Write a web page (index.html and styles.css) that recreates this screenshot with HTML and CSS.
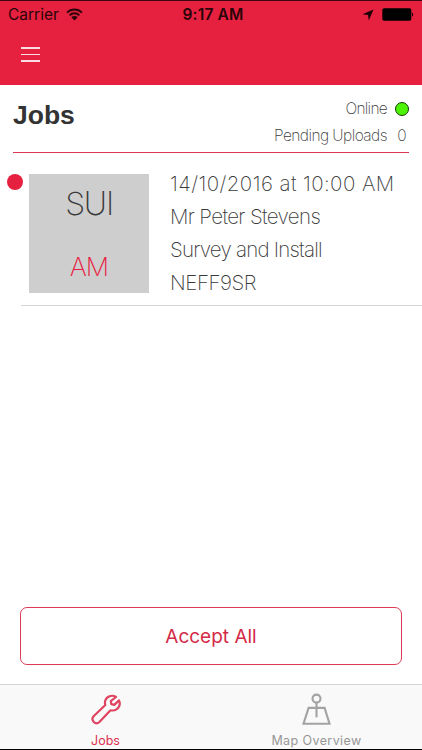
FILE: index.html
```html
<!DOCTYPE html>
<html lang="en">
<head>
  <meta charset="UTF-8">
  <meta name="viewport" content="width=device-width, initial-scale=1.0">
  <title>Jobs</title>
  <link rel="stylesheet" href="styles.css">
</head>
<body>

<header>
  <div class="status-bar">
    <div class="carrier">
      <span>Carrier</span>
      <svg class="wifi" width="17" height="13" viewBox="0 0 17 13">
        <path d="M1 4.6a10.6 10.6 0 0 1 15 0M3.6 7.3a6.9 6.9 0 0 1 9.800 0" fill="none" stroke="#2a0408" stroke-width="1.9"/>
        <path d="M5.300 9.200a4.600 4.600 0 0 1 6.400 0L8.500 12.400z" fill="#2a0408"/>
      </svg>
    </div>
    <div class="time">9:17 AM</div>
    <div class="battery">
      <svg width="12" height="12" viewBox="0 0 12 12">
        <path d="M11.5.5 6.8 11.5 6 6 .5 5.2z" fill="#1c0205"/>
      </svg>
      <svg width="33" height="13" viewBox="0 0 33 13">
        <rect x="1.3" y="0.3" width="29" height="12.4" rx="1.8" fill="#000"/>
        <path d="M31 4.500a2.400 2.400 0 0 1 0 4z" fill="#000"/>
      </svg>
    </div>
  </div>
  <button class="menu" aria-label="Menu"><i></i><i></i><i></i></button>
</header>

<main>
  <div class="heading">
    <h1>Jobs</h1>
    <div class="sync">
      <div class="sync-row"><span class="online">Online</span><span class="dot"></span></div>
      <div class="sync-row"><span class="pending">Pending Uploads</span><span class="count">0</span></div>
    </div>
  </div>

  <div class="job">
    <span class="marker"></span>
    <div class="tile">
      <span class="type">SUI</span>
      <span class="slot">AM</span>
    </div>
    <div class="details">
      <div class="date">14/10/2016 at 10:00 AM</div>
      <div class="name">Mr Peter Stevens</div>
      <div class="work">Survey and Install</div>
      <div class="postcode">NEFF9SR</div>
    </div>
  </div>

  <button class="accept">Accept All</button>
</main>

<nav>
  <a class="tab active">
    <svg width="30" height="32" viewBox="0 0 30 32">
      <path d="M25 4C21 1.300 15.500 3.300 14.200 7.800c-.4 1.600-.3 2.900.1 4.200L2.600 23.300c-3.300 3.900 1.900 9.400 5.800 5.700L19.500 17.300c4.700 1 9-2 9.300-6.600 0-1.300-.3-2.300-.8-3.300l-4.700 4.500-3-.8-.5-3z" fill="none" stroke="#df4560" stroke-width="2.2" stroke-linejoin="round"/>
    </svg>
    <span>Jobs</span>
  </a>
  <a class="tab map">
    <svg width="30" height="32" viewBox="0 0 30 32">
      <g fill="none" stroke="#a3a3a3" stroke-width="2.1">
        <circle cx="14.500" cy="5.600" r="4"/>
        <path d="M14.500 9.600v14.600M6.600 14.900h16L27.500 30.800h-26z"/>
      </g>
    </svg>
    <span>Map Overview</span>
  </a>
</nav>

</body>
</html>
```
FILE: styles.css
```css
body {
  margin: 0;
  height: 750px;
  display: flex;
  flex-direction: column;
  box-sizing: border-box;
  border-top: 1px solid #3d0710;
  border-bottom: 1px solid #000;
  background-color: #fff;
  font-family: Inter, "Liberation Sans", sans-serif;
  color: #3a3a3a;
  overflow: hidden;
}

button {
  padding: 0;
  background: none;
  font-family: inherit;
}

header {
  height: 84px;
  background-color: #e6203f;
}

.status-bar {
  display: grid;
  grid-template-columns: 1fr auto 1fr;
  align-items: center;
  height: 27px;
  padding: 0 8px;
  font-size: 15.5px;
  color: #2a0408;
}

.carrier {
  display: flex;
  align-items: center;
  gap: 7px;
}

.time {
  padding-left: 4px;
  font-weight: 600;
  letter-spacing: 0.2px;
}

.battery {
  display: flex;
  align-items: center;
  justify-content: flex-end;
  gap: 7px;
}

.menu {
  display: flex;
  flex-direction: column;
  gap: 5px;
  margin: 19px 0 0 21px;
  border: none;
}

.menu i {
  width: 19px;
  height: 1.5px;
  background-color: #fbdce1;
}

main {
  flex: 1;
  display: flex;
  flex-direction: column;
}

.heading {
  display: flex;
  justify-content: space-between;
  height: 67px;
  margin: 0 13px;
  border-bottom: 1px solid #d93850;
}

h1 {
  margin: 14px 0 0;
  font: bold 26.5px/32px "Liberation Sans", sans-serif;
  color: #333;
}

.sync {
  padding-top: 10px;
}

.sync-row {
  display: flex;
  align-items: center;
  justify-content: flex-end;
  height: 27px;
  font-size: 15.5px;
  font-weight: 200;
}

.online {
  letter-spacing: -0.7px;
}

.pending {
  letter-spacing: -0.55px;
}

.dot {
  box-sizing: border-box;
  width: 14px;
  height: 14px;
  margin-left: 8px;
  border: 1.5px solid #123b04;
  border-radius: 50%;
  background-color: #4cf404;
}

.count {
  width: 14px;
  margin-left: 8px;
  text-align: center;
}

.job {
  display: flex;
  height: 131px;
  margin-left: 21px;
  padding: 21px 0 0 8px;
  border-bottom: 1px solid #d4d4d4;
}

.marker {
  width: 16px;
  height: 16px;
  margin: 0 6px 0 -22px;
  border-radius: 50%;
  background-color: #e6203f;
}

.tile {
  display: flex;
  flex-direction: column;
  align-items: center;
  width: 120px;
  height: 119px;
  background-color: #cecece;
  font-weight: 200;
}

.type {
  margin-top: 10px;
  font-size: 32px;
  line-height: 40px;
  letter-spacing: -1.2px;
}

.slot {
  margin-top: 27px;
  font-size: 26px;
  line-height: 32px;
  letter-spacing: -1px;
  color: #e6203f;
}

.details {
  margin: -7px 0 0 21px;
  font-size: 20.5px;
  font-weight: 200;
  line-height: 33px;
  white-space: nowrap;
}

.date {
  letter-spacing: 0.42px;
}

.name {
  letter-spacing: -0.62px;
}

.work {
  letter-spacing: -0.78px;
}

.postcode {
  letter-spacing: -0.45px;
}

.accept {
  height: 58px;
  margin: auto 20px 19px;
  border: 1.5px solid #df3a55;
  border-radius: 7px;
  font-size: 19px;
  color: #d42a47;
}

nav {
  display: flex;
  height: 64px;
  border-top: 1px solid #d6d6d6;
  background-color: #f9f9f9;
}

.tab {
  flex: 1;
  display: flex;
  flex-direction: column;
  align-items: center;
  padding-top: 8px;
  font-size: 12.5px;
  line-height: 16px;
  color: #979797;
}

.tab span {
  margin-top: 8px;
}

.active {
  color: #dc3451;
}

.map {
  letter-spacing: 0.4px;
}
```
